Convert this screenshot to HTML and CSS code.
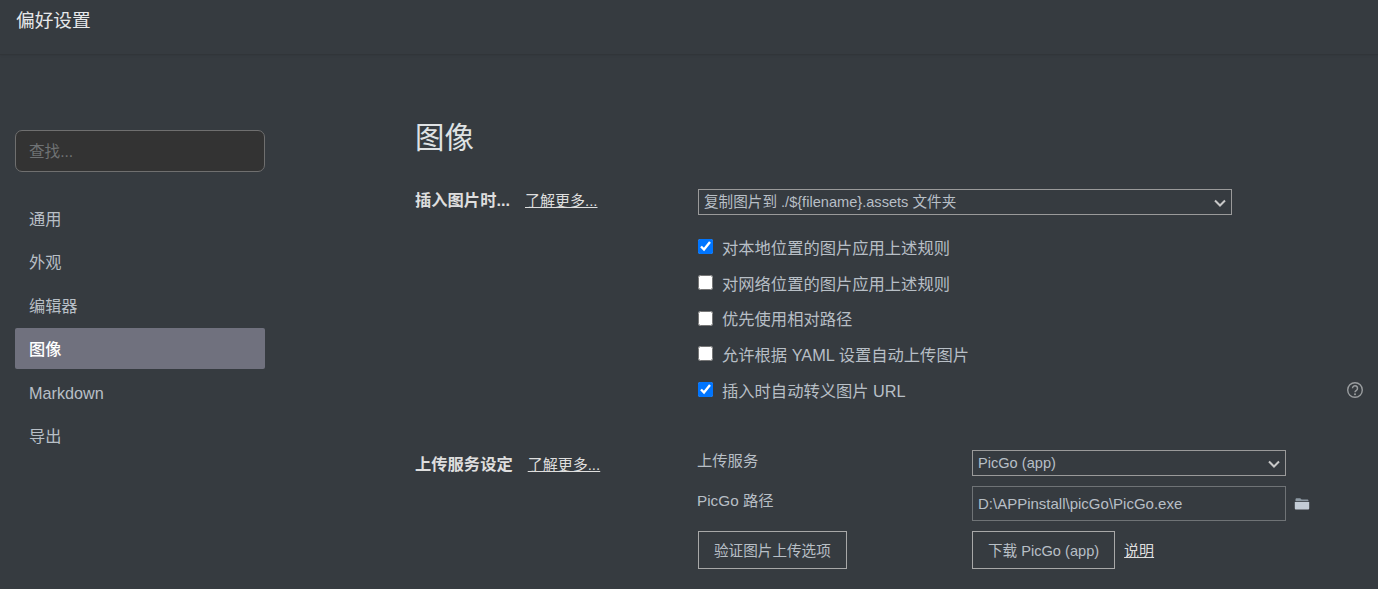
FILE: index.html
```html
<!DOCTYPE html>
<html lang="zh-CN">
<head>
<meta charset="utf-8">
<title>偏好设置</title>
<link rel="stylesheet" href="styles.css">
</head>
<body>
<header class="titlebar">偏好设置</header>
<div class="layout">
  <aside class="sidebar">
    <input class="search" type="text" placeholder="查找...">
    <nav class="nav">
      <a class="nav-item">通用</a>
      <a class="nav-item">外观</a>
      <a class="nav-item">编辑器</a>
      <a class="nav-item active">图像</a>
      <a class="nav-item">Markdown</a>
      <a class="nav-item">导出</a>
    </nav>
  </aside>
  <main class="content">
    <h1 class="page-title">图像</h1>
    <section class="group insert-group">
      <div class="group-label"><strong>插入图片时...</strong><a class="more more-first">了解更多...</a></div>
      <div class="group-body">
        <div class="select-wrap select-wide">
          <select class="select"><option>复制图片到 ./${filename}.assets 文件夹</option></select>
          <svg class="chevron" viewBox="0 0 12 8" width="12" height="8"><path d="M1 1.5l5 5 5-5" fill="none" stroke="#c8c8c8" stroke-width="2"/></svg>
        </div>
        <ul class="checks">
          <li><label class="check"><input type="checkbox" checked>对本地位置的图片应用上述规则</label></li>
          <li><label class="check"><input type="checkbox">对网络位置的图片应用上述规则</label></li>
          <li><label class="check"><input type="checkbox">优先使用相对路径</label></li>
          <li><label class="check"><input type="checkbox">允许根据 YAML 设置自动上传图片</label></li>
          <li class="check-help"><label class="check"><input type="checkbox" checked>插入时自动转义图片 URL</label>
            <svg class="help" viewBox="0 0 16 16" width="16" height="16"><circle cx="8" cy="8" r="7.3" fill="none" stroke="#9a9d9f" stroke-width="1.4"/><path d="M5.5 6.2a2.5 2.5 0 1 1 3.9 2.1c-1 .6-1.4 1-1.4 2" fill="none" stroke="#9a9d9f" stroke-width="1.5"/><circle cx="8" cy="12.2" r="1" fill="#9a9d9f"/></svg>
          </li>
        </ul>
      </div>
    </section>
    <section class="group upload-group">
      <div class="group-label"><strong>上传服务设定</strong><a class="more more-second">了解更多...</a></div>
      <div class="upload-grid">
        <span class="field-label">上传服务</span>
        <div class="select-wrap select-service">
          <select class="select"><option>PicGo (app)</option></select>
          <svg class="chevron" viewBox="0 0 12 8" width="12" height="8"><path d="M1 1.5l5 5 5-5" fill="none" stroke="#c8c8c8" stroke-width="2"/></svg>
        </div>
        <span class="field-label">PicGo 路径</span>
        <div class="path-row">
          <input class="path" type="text" value="D:\APPinstall\picGo\PicGo.exe">
          <svg class="folder" viewBox="0 0 16 13" width="16" height="13"><path d="M1.5 2.5C1.5 1.7 2 1.2 2.8 1.2h3.4l1.4 1.4h5.6c.8 0 1.3.5 1.3 1.2v.4H1.5z" fill="#8d99a3"/><path d="M.8 5h14.4v6.2c0 .8-.5 1.3-1.3 1.3H2.1c-.8 0-1.3-.5-1.3-1.3z" fill="#c3ccd6"/></svg>
        </div>
        <div><button class="btn" type="button">验证图片上传选项</button></div>
        <div class="btn-row"><button class="btn" type="button">下载 PicGo (app)</button><a class="more more-note">说明</a></div>
      </div>
    </section>
  </main>
</div>
</body>
</html>
```
FILE: styles.css
```css
* { box-sizing: border-box; }
html, body { height: 100%; }
body {
  margin: 0;
  height: 589px;
  overflow: hidden;
  background: #363b40;
  color: #b8bfc6;
  font-family: "Liberation Sans", "Noto Sans CJK SC", sans-serif;
  font-size: 15px;
}
.titlebar {
  height: 55px;
  padding: 9px 16px 0;
  font-size: 18.7px;
  line-height: 24px;
  color: #e6e8ea;
  border-bottom: 1px solid #313539;
  box-shadow: 0 1px 2px rgba(0,0,0,.06);
}
.layout { display: flex; }
.sidebar { width: 415px; padding: 75px 0 0 15px; flex: none; }
.search {
  display: block;
  width: 250px;
  height: 42px;
  padding: 2px 13px 0;
  background: #333;
  border: 1px solid #6f6f6f;
  border-radius: 7px;
  color: #ccc;
  font: 15.6px "Liberation Sans", "Noto Sans CJK SC", sans-serif;
  outline: none;
}
.search::placeholder { color: #6f7274; opacity: 1; }
.nav { display: flex; flex-direction: column; gap: 2.4px; width: 250px; margin-top: 26px; }
.nav-item {
  height: 41px;
  padding: 1px 14px 0;
  line-height: 40px;
  font-size: 16.2px;
  border-radius: 2px;
}
.nav-item.active { background: #70717e; color: #fff; font-weight: 500; }
.content { flex: 1; min-width: 0; padding: 0 15px 0 0; }
.page-title {
  margin: 65px 0 0;
  font-size: 29.4px;
  line-height: 36px;
  font-weight: 400;
  color: #dfe2e4;
}
.group { display: flex; }
.group-label { width: 283px; flex: none; color: #ddd; }
.group-label strong { font-size: 16.3px; font-weight: 700; color: #dedede; }
.more { color: #dedede; text-decoration: underline; font-size: 15px; cursor: pointer; }
.more-first { margin-left: 15px; }
.more-second { margin-left: 15px; }
.more-note { padding-bottom: 2px; }
.insert-group { margin-top: 33px; }
.insert-group .group-label { padding-top: 0; line-height: 22px; }
.group-body { flex: 1; min-width: 0; }
.select-wrap { position: relative; }
.select-wide { width: 534px; height: 26px; }
.select-service { width: 314px; height: 26px; }
.select {
  appearance: none;
  display: block;
  width: 100%;
  height: 100%;
  padding: 0 24px 0 5px;
  background: transparent;
  border: 1px solid #9a9a9a;
  border-radius: 0;
  color: #b8bfc6;
  font: 14.6px "Liberation Sans", "Noto Sans CJK SC", sans-serif;
  outline: none;
}
.chevron { position: absolute; right: 6px; top: 10px; pointer-events: none; }
.checks { list-style: none; margin: 14px 0 0; padding: 0; }
.checks li { height: 35.7px; display: flex; align-items: center; }
.check { display: flex; align-items: center; font-size: 16.3px; }
.check input { width: 15px; height: 15px; margin: 0 9px 0 0; flex: none; }
.check-help { justify-content: space-between; }
.help { margin-right: 0; }
.upload-group { margin-top: 44px; }
.upload-group .group-label { padding-top: 2px; line-height: 22px; }
.upload-grid {
  display: grid;
  grid-template-columns: 274px 1fr;
  grid-template-rows: 26px 35px auto;
  row-gap: 10px;
  align-items: center;
  flex: 1;
  margin-top: -1px;
}
.field-label { font-size: 15.3px; padding-bottom: 9px; margin-left: -1px; }
.path-row { display: flex; align-items: center; gap: 8px; }
.path {
  width: 314px;
  height: 35px;
  padding: 0 5px;
  background: transparent;
  border: 1px solid #6f7376;
  color: #b8bfc6;
  font: 15px "Liberation Sans", "Noto Sans CJK SC", sans-serif;
  outline: none;
}
.btn {
  display: block;
  height: 38px;
  padding: 0 15px 2px;
  background: transparent;
  border: 1px solid #a8a8a8;
  border-radius: 0;
  color: #b8bfc6;
  font: 14.6px "Liberation Sans", "Noto Sans CJK SC", sans-serif;
}
.btn-row { display: flex; align-items: center; gap: 9px; }
```
